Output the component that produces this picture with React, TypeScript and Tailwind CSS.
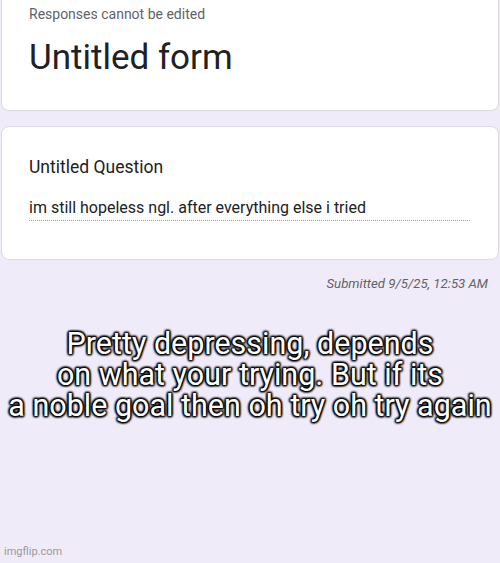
import React from "react";

export default function App() {
  const outline =
    "0 0 3px #000, 0 0 3px #000, 0 0 3px #000, 1px 1px 2px #000, -1px -1px 2px #000, 1px -1px 2px #000, -1px 1px 2px #000";
  return (
    <div
      className="relative w-[500px] h-[563px] overflow-hidden bg-[#f0ebf8] px-px"
      style={{ fontFamily: "Roboto, 'Noto Sans', sans-serif" }}
    >
      <div className="h-[111px] rounded-b-lg border border-t-0 border-[#dadce0] bg-white pl-[27px] pt-[4px]">
        <div className="text-[14px] leading-[20px] text-[#5f6368]">Responses cannot be edited</div>
        <div className="mt-[12px] text-[35px] leading-[44px] text-[#202124]">Untitled form</div>
      </div>
      <div className="mt-[15px] h-[134px] rounded-lg border border-[#dadce0] bg-white pl-[27px] pr-[28px] pt-[27px]">
        <div className="text-[17.5px] leading-[26px] text-[#202124]">Untitled Question</div>
        <div className="mt-[17px] border-b border-dotted border-[#9aa0a6] pb-[1px] text-[16px] leading-[22px] text-[#202124]">
          im still hopeless ngl. after everything else i tried
        </div>
      </div>
      <div className="mt-[14px] pr-[11px] text-right text-[13.2px] italic leading-[20px] text-[#5f6368]">
        Submitted 9/5/25, 12:53 AM
      </div>
      <div
        className="mt-[34px] text-center text-[30.5px] leading-[31px] text-white"
        style={{ textShadow: outline }}
      >
        <div>Pretty depressing, depends</div>
        <div>on what your trying. But if its</div>
        <div>a noble goal then oh try oh try again</div>
      </div>
      <div className="absolute bottom-[3px] left-[4px] text-[11px] text-[#9a97a0]">imgflip.com</div>
    </div>
  );
}
